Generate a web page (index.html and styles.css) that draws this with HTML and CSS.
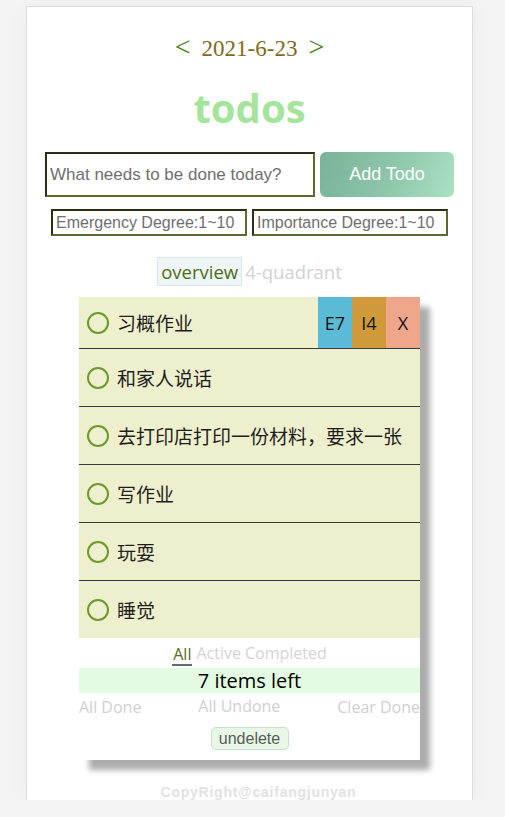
FILE: index.html
```html
<!DOCTYPE html>
<html lang="zh">
<head>
<meta charset="utf-8">
<title>todos</title>
<link rel="stylesheet" href="styles.css">
</head>
<body>
<div class="card">
  <div class="date-row">
    <span class="arrow">&lt;</span>
    <span class="date">2021-6-23</span>
    <span class="arrow">&gt;</span>
  </div>
  <h1 class="title">todos</h1>
  <div class="add-row">
    <input class="new-todo" type="text" placeholder="What needs to be done today?">
    <button class="add-btn">Add Todo</button>
  </div>
  <div class="degree-row">
    <input class="degree" type="text" placeholder="Emergency Degree:1~10">
    <input class="degree" type="text" placeholder="Importance Degree:1~10">
  </div>
  <div class="tabs">
    <span class="tab active">overview</span>
    <span class="tab">4-quadrant</span>
  </div>
  <div class="list">
    <ul class="items">
      <li class="item first">
        <span class="check"></span>
        <span class="label">习概作业</span>
        <span class="tags">
          <span class="tag tag-e">E7</span>
          <span class="tag tag-i">I4</span>
          <span class="tag tag-x">X</span>
        </span>
      </li>
      <li class="item"><span class="check"></span><span class="label">和家人说话</span></li>
      <li class="item"><span class="check"></span><span class="label">去打印店打印一份材料，要求一张</span></li>
      <li class="item"><span class="check"></span><span class="label">写作业</span></li>
      <li class="item"><span class="check"></span><span class="label">玩耍</span></li>
      <li class="item"><span class="check"></span><span class="label">睡觉</span></li>
    </ul>
    <div class="filters">
      <span class="filter selected">All</span>
      <span class="filter">Active</span>
      <span class="filter">Completed</span>
    </div>
    <div class="count">7 items left</div>
    <div class="actions">
      <span class="action">All Done</span>
      <span class="action raised">All Undone</span>
      <span class="action">Clear Done</span>
    </div>
    <div class="undelete-row">
      <button class="undelete">undelete</button>
    </div>
  </div>
  <div class="copyright">CopyRight@caifangjunyan</div>
</div>
</body>
</html>
```
FILE: styles.css
```css
html, body {
  margin: 0;
  padding: 0;
}
body {
  background: #f4f4f4;
  font-family: "Open Sans", "Noto Sans CJK SC", sans-serif;
}
.card {
  box-sizing: border-box;
  margin: 6px 0 0 26px;
  width: 447px;
  height: 794px;
  background: #fff;
  border: 1px solid #dcdcdc;
  border-bottom: none;
  box-shadow: 0 0 18px rgba(0, 0, 0, 0.04);
  overflow: hidden;
}
.date-row {
  margin-top: 25px;
  height: 30px;
  display: flex;
  justify-content: center;
  align-items: center;
  gap: 11px;
  font-family: "Liberation Serif", "DejaVu Serif", serif;
}
.arrow {
  color: #4b7f12;
  font-size: 28px;
  line-height: 30px;
}
.date {
  color: #7d6c1e;
  font-size: 23px;
  line-height: 30px;
  padding-top: 3px;
}
.title {
  margin: 22px 0 0;
  height: 48px;
  line-height: 48px;
  text-align: center;
  font-family: "Open Sans", sans-serif;
  font-weight: 700;
  font-size: 40px;
  color: #a4e59b;
}
.add-row {
  margin-top: 20px;
  display: flex;
  justify-content: center;
  gap: 5px;
}
.new-todo {
  box-sizing: border-box;
  width: 270px;
  height: 45px;
  margin: 0;
  padding: 0 3px;
  border: 2px solid;
  border-color: #283018 #5b6b2e #5b6b2e #283018;
  font-family: "Liberation Sans", Arial, sans-serif;
  font-size: 17px;
  outline: none;
}
.new-todo::placeholder,
.degree::placeholder {
  color: #6f6f6f;
}
.add-btn {
  box-sizing: border-box;
  width: 134px;
  height: 45px;
  margin: 0;
  border: none;
  border-radius: 6px;
  background: linear-gradient(110deg, #79b299 0%, #8fc7ab 55%, #abe1c3 100%);
  color: #fff;
  font-family: "Liberation Sans", Arial, sans-serif;
  font-size: 18px;
}
.degree-row {
  margin-top: 12px;
  display: flex;
  justify-content: center;
  gap: 5px;
}
.degree {
  box-sizing: border-box;
  width: 196px;
  height: 27px;
  margin: 0;
  padding: 0 3px;
  border: 2px solid;
  border-color: #283018 #5b6b2e #5b6b2e #283018;
  font-family: "Liberation Sans", Arial, sans-serif;
  font-size: 16px;
  outline: none;
}
.tabs {
  margin-top: 21px;
  height: 29px;
  display: flex;
  justify-content: center;
  align-items: center;
  gap: 3px;
  font-size: 18.5px;
}
.tab {
  color: #d2d2d2;
  line-height: 27px;
}
.tab.active {
  color: #4d6e14;
  background: #eef6f8;
  border: 1px solid #d6e6ee;
  padding: 0 3px;
}
.list {
  margin: 11px auto 0;
  width: 341px;
  background: #fff;
  box-shadow: 10px 10px 6px #acacac;
  padding-bottom: 10px;
}
.items {
  list-style: none;
  margin: 0;
  padding: 0;
}
.item {
  display: flex;
  align-items: center;
  height: 57px;
  background: #eeefcd;
  border-bottom: 1px solid #3a3a3a;
  padding-left: 8px;
}
.item:last-child {
  border-bottom: none;
}
.item.first {
  height: 51px;
}
.check {
  box-sizing: border-box;
  width: 22px;
  height: 22px;
  border: 2.5px solid #6c9a2a;
  border-radius: 50%;
  flex: none;
}
.label {
  margin-left: 8px;
  font-size: 19px;
  color: #1e1e1e;
  flex: 1;
  white-space: nowrap;
}
.tags {
  display: flex;
  align-self: stretch;
}
.tag {
  width: 34px;
  display: flex;
  align-items: center;
  justify-content: center;
  font-size: 18px;
  color: #111;
}
.tag-e {
  background: #5bbad6;
}
.tag-i {
  background: #d09a3a;
}
.tag-x {
  background: #efa68b;
}
.filters {
  height: 30px;
  display: flex;
  justify-content: center;
  align-items: center;
  gap: 4px;
  font-size: 16px;
}
.filter {
  color: #d4d4d4;
  line-height: 20px;
}
.filter.selected {
  color: #5a6a1e;
  border-bottom: 2px solid #6a6a6a;
  padding: 0 1px;
  margin-top: 3px;
}
.count {
  height: 25px;
  line-height: 25px;
  background: #e4fbe3;
  text-align: center;
  font-size: 20px;
  color: #000;
}
.actions {
  height: 28px;
  display: flex;
  justify-content: space-between;
  align-items: center;
  font-size: 16px;
  color: #d0d0d0;
}
.action.raised {
  margin-bottom: 3px;
}
.undelete-row {
  margin-top: 6px;
  display: flex;
  justify-content: center;
}
.undelete {
  box-sizing: border-box;
  width: 78px;
  height: 23px;
  margin: 0;
  padding: 0;
  background: #e8f7e6;
  border: 1px solid #c9dec7;
  border-radius: 5px;
  font-family: "Liberation Sans", Arial, sans-serif;
  font-size: 16px;
  color: #5a5a5a;
}
.copyright {
  margin-top: 22px;
  padding-left: 18px;
  line-height: 20px;
  text-align: center;
  font-family: "Liberation Sans", Arial, sans-serif;
  font-weight: 700;
  font-size: 14px;
  letter-spacing: 0.75px;
  color: #e2e2e2;
}
```
